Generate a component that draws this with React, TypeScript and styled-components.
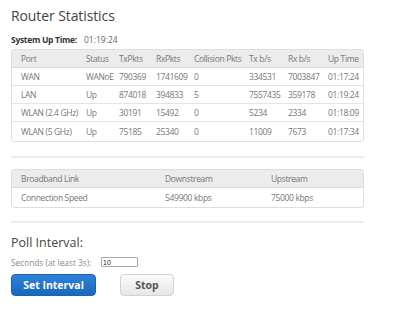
import styled, { createGlobalStyle } from 'styled-components';

const GlobalStyle = createGlobalStyle`
  body {
    margin: 0;
    background: #fff;
    font-family: "Open Sans", "Liberation Sans", sans-serif;
  }
`;

const Page = styled.div`
  width: 353px;
  padding: 7px 0 0 11px;
  display: flex;
  flex-direction: column;
`;

const Title = styled.h1`
  margin: 0;
  font-size: 14px;
  font-weight: 400;
  color: #444;
  line-height: 18px;
  letter-spacing: -0.1px;
`;

const UpTime = styled.div`
  margin-top: 9px;
  display: flex;
  font-size: 8.5px;
  line-height: 12px;
  color: #666;
  b {
    width: 73px;
    color: #333;
    letter-spacing: -0.3px;
  }
`;

const Card = styled.div<{ $top: number }>`
  margin-top: ${(p) => p.$top}px;
  border: 1px solid #dedede;
  border-radius: 3px;
  overflow: hidden;
`;

const Table = styled.table`
  width: 100%;
  border-collapse: collapse;
  table-layout: fixed;
  font-size: 8.5px;
  color: #777;
  letter-spacing: -0.35px;
  th {
    background: #ececec;
    font-weight: 400;
    text-align: left;
    height: 17px;
    padding: 0;
    border-bottom: 1px solid #dcdcdc;
  }
  td {
    height: 17px;
    padding: 0;
    border-bottom: 1px solid #e4e4e4;
    white-space: nowrap;
  }
  tr:last-child td {
    border-bottom: none;
    height: 19px;
  }
  th:first-child,
  td:first-child {
    padding-left: 9px;
  }
`;

const Rule = styled.hr<{ $top: number }>`
  margin: ${(p) => p.$top}px 0 0;
  border: none;
  border-top: 2px solid #ececec;
`;

const PollTitle = styled.h2`
  margin: 12px 0 0;
  font-size: 12.5px;
  font-weight: 400;
  color: #444;
  line-height: 16px;
`;

const SecondsRow = styled.label`
  margin-top: 6px;
  display: flex;
  align-items: center;
  font-size: 8.3px;
  color: #8a8a8a;
  height: 10px;
  span {
    width: 90px;
  }
  input {
    width: 33px;
    height: 8px;
    padding: 0 1px;
    border: 1px solid #a9a9a9;
    border-radius: 1px;
    font-size: 7px;
    font-family: "Liberation Sans", sans-serif;
    color: #222;
  }
`;

const Buttons = styled.div`
  margin-top: 7px;
  display: flex;
  gap: 24px;
`;

const Button = styled.button<{ $primary?: boolean }>`
  height: 22px;
  width: ${(p) => (p.$primary ? 85 : 54)}px;
  border-radius: 4px;
  font-family: "Open Sans", "Liberation Sans", sans-serif;
  font-size: 10.5px;
  font-weight: 700;
  padding: 0;
  cursor: pointer;
  border: 1px solid ${(p) => (p.$primary ? '#1a62b3' : '#d2d2d2')};
  color: ${(p) => (p.$primary ? '#fff' : '#555')};
  background: ${(p) =>
    p.$primary
      ? 'linear-gradient(#2d82d8, #1868bd)'
      : 'linear-gradient(#fbfbfb, #e6e6e6)'};
`;

const stats = [
  ['WAN', 'WANoE', '790369', '1741609', '0', '334531', '7003847', '01:17:24'],
  ['LAN', 'Up', '874018', '394833', '5', '7557435', '359178', '01:19:24'],
  ['WLAN (2.4 GHz)', 'Up', '30191', '15492', '0', '5234', '2334', '01:18:09'],
  ['WLAN (5 GHz)', 'Up', '75185', '25340', '0', '11009', '7673', '01:17:34'],
];

const statCols = [
  ['Port', 74],
  ['Status', 33],
  ['TxPkts', 37],
  ['RxPkts', 38],
  ['Collision Pkts', 55],
  ['Tx b/s', 39],
  ['Rx b/s', 40],
  ['Up Time', 37],
] as const;

const linkCols = [
  ['Broadband Link', 153],
  ['Downstream', 106],
  ['Upstream', 94],
] as const;

function App() {
  return (
    <Page>
      <GlobalStyle />
      <Title>Router Statistics</Title>
      <UpTime>
        <b>System Up Time:</b>
        <span>01:19:24</span>
      </UpTime>

      <Card $top={3}>
        <Table>
          <colgroup>
            {statCols.map(([name, w]) => (
              <col key={name} style={{ width: w }} />
            ))}
          </colgroup>
          <thead>
            <tr>
              {statCols.map(([name]) => (
                <th key={name}>{name}</th>
              ))}
            </tr>
          </thead>
          <tbody>
            {stats.map((row) => (
              <tr key={row[0]}>
                {row.map((cell, i) => (
                  <td key={i}>{cell}</td>
                ))}
              </tr>
            ))}
          </tbody>
        </Table>
      </Card>

      <Rule $top={14} />

      <Card $top={11}>
        <Table>
          <colgroup>
            {linkCols.map(([name, w]) => (
              <col key={name} style={{ width: w }} />
            ))}
          </colgroup>
          <thead>
            <tr>
              {linkCols.map(([name]) => (
                <th key={name}>{name}</th>
              ))}
            </tr>
          </thead>
          <tbody>
            <tr>
              <td>Connection Speed</td>
              <td>549900 kbps</td>
              <td>75000 kbps</td>
            </tr>
          </tbody>
        </Table>
      </Card>

      <Rule $top={13} />

      <PollTitle>Poll Interval:</PollTitle>
      <SecondsRow>
        <span>Seconds (at least 3s):</span>
        <input defaultValue="10" />
      </SecondsRow>
      <Buttons>
        <Button $primary>Set Interval</Button>
        <Button>Stop</Button>
      </Buttons>
    </Page>
  );
}

export default App;
